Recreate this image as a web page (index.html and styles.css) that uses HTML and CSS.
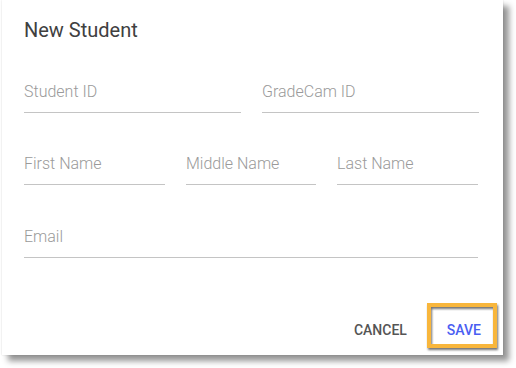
FILE: index.html
```html
<!DOCTYPE html>
<html>
<head>
<meta charset="utf-8">
<link rel="stylesheet" href="styles.css">
</head>
<body>
<div class="dialog">
  <h2 class="title">New Student</h2>
  <div class="form">
    <div class="row two">
      <div class="field"><span class="label">Student ID</span></div>
      <div class="field"><span class="label">GradeCam ID</span></div>
    </div>
    <div class="row three">
      <div class="field"><span class="label">First Name</span></div>
      <div class="field"><span class="label">Middle Name</span></div>
      <div class="field"><span class="label">Last Name</span></div>
    </div>
    <div class="row one">
      <div class="field"><span class="label">Email</span></div>
    </div>
  </div>
  <div class="actions">
    <button class="btn cancel">CANCEL</button>
    <button class="btn save">SAVE<span class="highlight"></span></button>
  </div>
</div>
</body>
</html>
```

FILE: styles.css
```css
html, body {
  margin: 0;
  padding: 0;
  background: #ffffff;
  font-family: Roboto, "Liberation Sans", Arial, sans-serif;
}

body {
  box-sizing: border-box;
  min-height: 368px;
  padding-bottom: 13px;
}

.dialog {
  box-sizing: border-box;
  margin-left: 2px;
  width: 501px;
  height: 355px;
  background: #ffffff;
  box-shadow: 0 0 2px rgba(0, 0, 0, 0.14), 6px 6px 6px rgba(0, 0, 0, 0.42);
  padding: 18px 24px 7px 22px;
  display: flex;
  flex-direction: column;
}

.title {
  margin: 0;
  font-size: 20px;
  line-height: 24px;
  font-weight: 400;
  color: #404040;
}

.form {
  margin-top: 40px;
  display: flex;
  flex-direction: column;
  gap: 41px;
}

.form .row.one { margin-top: 1px; }

.row {
  display: grid;
  column-gap: 21px;
}

.row.two { grid-template-columns: 217px 217px; }
.row.three { grid-template-columns: 141px 130px 141px; }
.row.one { grid-template-columns: 454px; }

.field {
  height: 30px;
  border-bottom: 1px solid #c4c4c4;
}

.label {
  display: block;
  font-size: 16px;
  line-height: 20px;
  font-weight: 300;
  color: #9a9a9a;
}

.actions {
  margin-top: auto;
  margin-right: -10px;
  display: flex;
  justify-content: flex-end;
  align-items: center;
  gap: 24px;
}

.btn {
  border: none;
  background: transparent;
  font-family: Roboto, "Liberation Sans", Arial, sans-serif;
  font-size: 14px;
  font-weight: 500;
  line-height: 36px;
  height: 36px;
  padding: 0 8px;
  margin: 0;
}

.cancel { color: #555555; }

.save {
  position: relative;
  color: #4a5ef2;
}

.highlight {
  position: absolute;
  left: -12px;
  right: -8px;
  top: -9px;
  bottom: 0;
  border: 4px solid #f8b63c;
  filter: drop-shadow(1px 2px 1px rgba(0, 0, 0, 0.55));
}
```
